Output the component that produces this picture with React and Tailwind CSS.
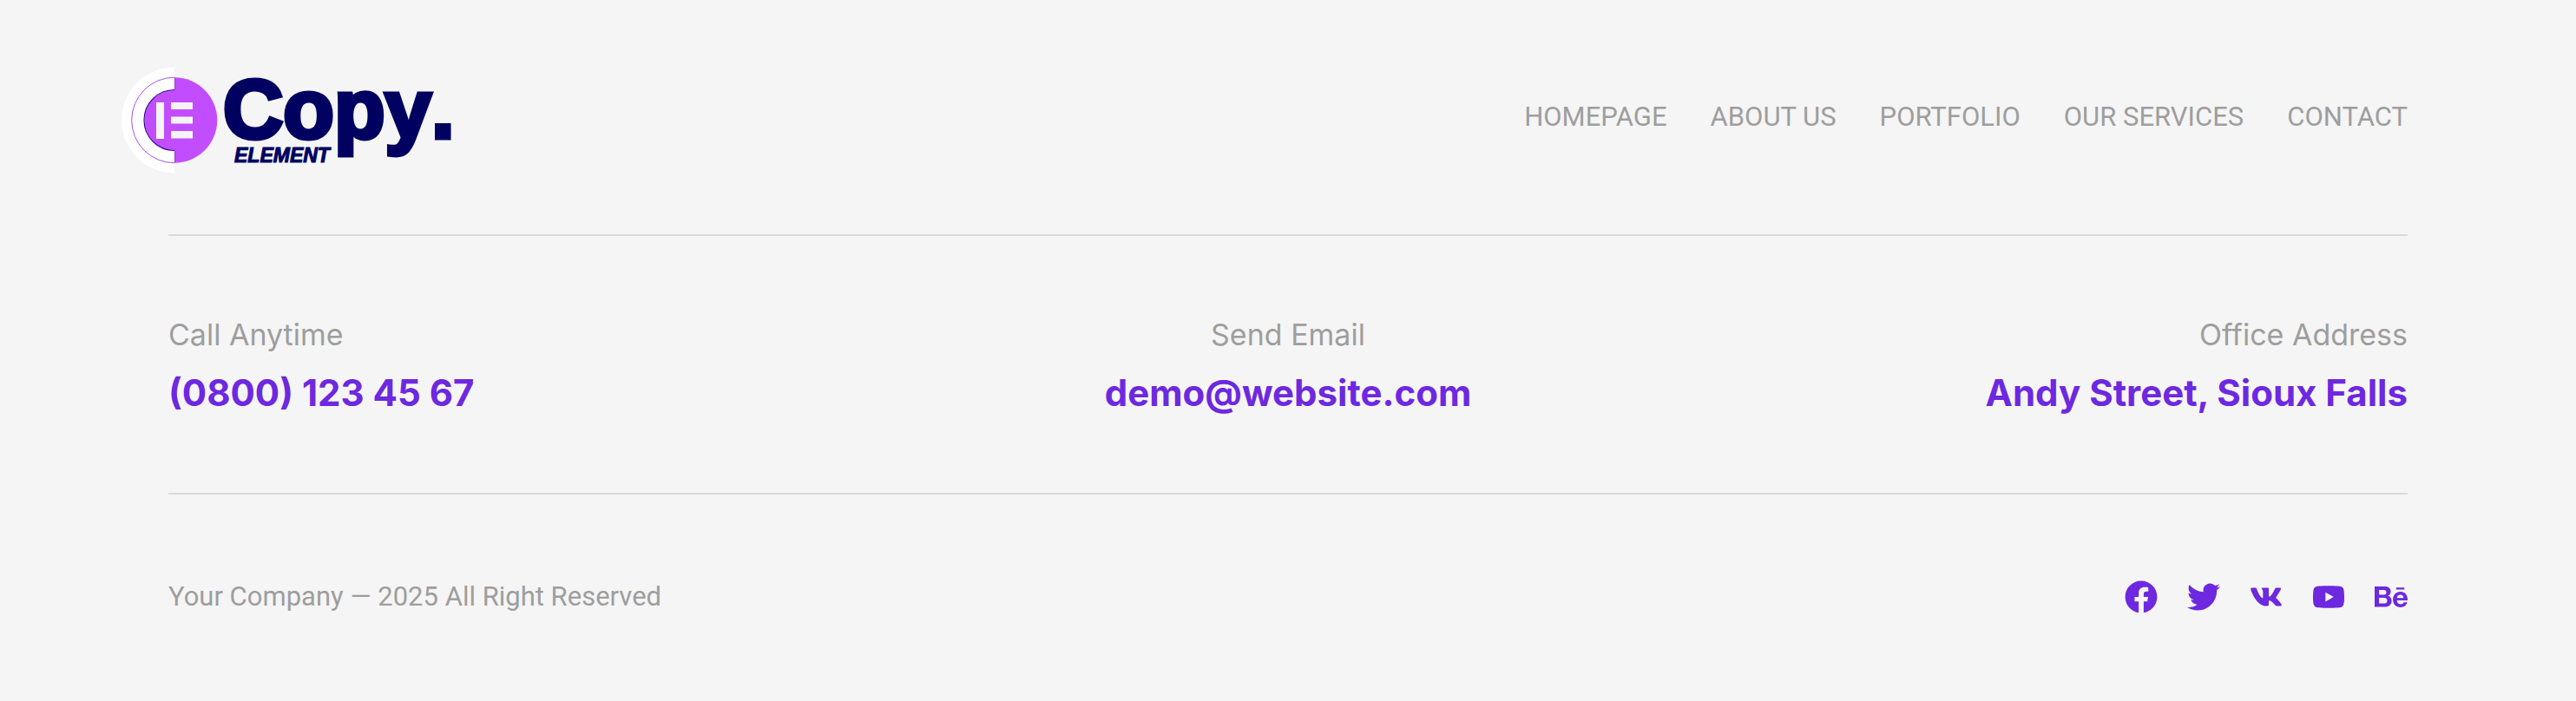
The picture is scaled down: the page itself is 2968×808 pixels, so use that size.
import React from 'react';
import { FaFacebook, FaTwitter, FaVk, FaYoutube, FaBehance } from 'react-icons/fa';

const navLinks = ['Homepage', 'About us', 'Portfolio', 'Our services', 'Contact'];

const contacts = [
  { label: 'Call Anytime', value: '(0800) 123 45 67', href: 'tel:08001234567', align: 'text-left' },
  { label: 'Send Email', value: 'demo@website.com', href: 'mailto:demo@website.com', align: 'text-center' },
  { label: 'Office Address', value: 'Andy Street, Sioux Falls', href: '#address', align: 'text-right' },
];

const socials = [
  { name: 'Facebook', Icon: FaFacebook },
  { name: 'Twitter', Icon: FaTwitter },
  { name: 'VK', Icon: FaVk },
  { name: 'YouTube', Icon: FaYoutube },
  { name: 'Behance', Icon: FaBehance },
];

const Logo = () => (
  <svg width="390" height="130" viewBox="0 0 390 130" role="img" aria-label="Copy Element">
    {/* Badge */}
    <path d="M61 7.5a61 61 0 0 0 0 122z" fill="#fff" />
    <path d="M61 19.2a49.3 49.3 0 0 0 0 98.6" fill="none" stroke="#9a3fe0" strokeWidth="0.9" />
    <path d="M61 19.2a49.3 49.3 0 0 1 0 98.6z" fill="#c24dff" />
    <path d="M61.5 33.5a35 35 0 0 0 0 70z" fill="#c24dff" />
    <path d="M61 33.5a35 35 0 0 0 0 70" fill="none" stroke="#3a0a94" strokeWidth="1.2" />
    <path d="M61.5 19.5v14M61.5 103.5v14" stroke="#a030e8" strokeWidth="1" />
    <path d="M40 48h9v42h-9zM57 48h25v8H57zM57 64.5h25v8H57zM57 81h25v8.500H57z" fill="#f5f5f5" />
    {/* Wordmark */}
    <text
      x="117"
      y="89"
      fill="#000060"
      stroke="#000060"
      strokeWidth="5"
      className="font-['Liberation_Sans'] text-[96px] font-bold [font-kerning:none]"
    >
      Copy.
    </text>
    <text
      x="130"
      y="117"
      fill="#000060"
      stroke="#000060"
      strokeWidth="1"
      className="font-['Liberation_Sans'] text-[23px] font-bold italic"
    >
      ELEMENT
    </text>
  </svg>
);

const App = () => {
  return (
    <footer className="min-h-screen bg-[#f5f5f5] px-[194px] font-['Inter',sans-serif] text-[#9e9e9e]">
      {/* Logo and navigation */}
      <div className="flex items-center justify-between border-b-2 border-[#dadada] py-[70px]">
        <a href="#home" className="-ml-[54px]">
          <Logo />
        </a>
        <nav className="flex gap-[50px] font-['Roboto',sans-serif] text-[31px] leading-9 uppercase">
          {navLinks.map((link) => (
            <a key={link} href="#nav">{link}</a>
          ))}
        </nav>
      </div>

      {/* Contact details */}
      <div className="grid grid-cols-3 border-b-2 border-[#dadada] pt-[88px] pb-[80px]">
        {contacts.map((item) => (
          <div key={item.label} className={item.align}>
            <p className="mb-1.5 text-[34px] leading-[52px]">{item.label}</p>
            <a href={item.href} className="block text-[42px] leading-[70px] font-bold text-[#6d28e0]">
              {item.value}
            </a>
          </div>
        ))}
      </div>

      {/* Copyright and social links */}
      <div className="flex items-center justify-between py-[98px]">
        <p className="font-['Roboto',sans-serif] text-[31px] leading-10">Your Company — 2025 All Right Reserved</p>
        <div className="flex gap-[34px] text-[38px] text-[#6d28e0]">
          {socials.map(({ name, Icon }) => (
            <a key={name} href="#social" aria-label={name}>
              <Icon />
            </a>
          ))}
        </div>
      </div>
    </footer>
  );
};

export default App;
